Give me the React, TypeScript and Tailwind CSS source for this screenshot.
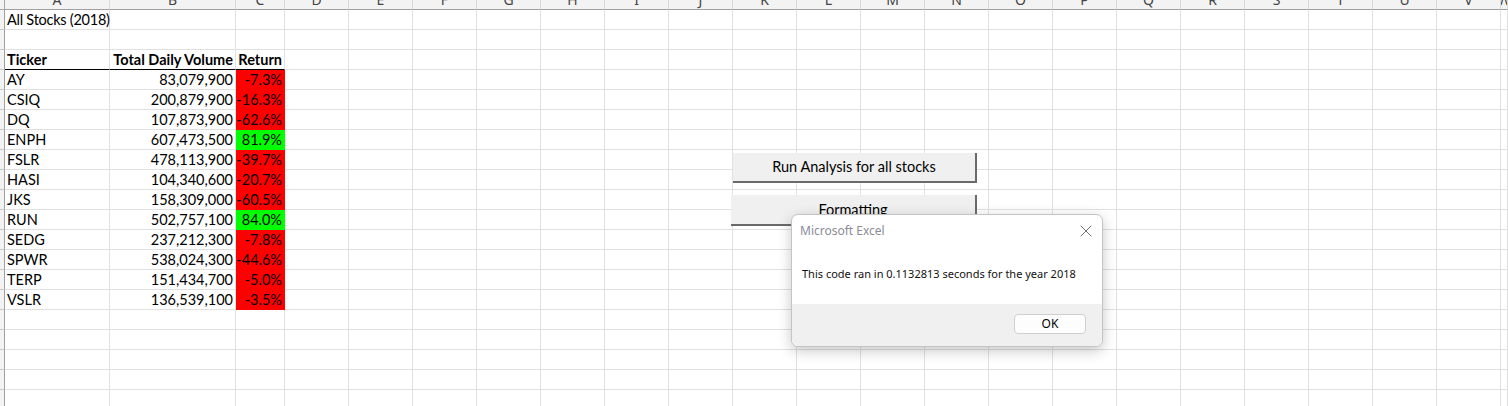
import { X } from "lucide-react";

type Stock = { ticker: string; volume: string; ret: string; up: boolean };

const stocks: Stock[] = [
  { ticker: "AY", volume: "83,079,900", ret: "-7.3%", up: false },
  { ticker: "CSIQ", volume: "200,879,900", ret: "-16.3%", up: false },
  { ticker: "DQ", volume: "107,873,900", ret: "-62.6%", up: false },
  { ticker: "ENPH", volume: "607,473,500", ret: "81.9%", up: true },
  { ticker: "FSLR", volume: "478,113,900", ret: "-39.7%", up: false },
  { ticker: "HASI", volume: "104,340,600", ret: "-20.7%", up: false },
  { ticker: "JKS", volume: "158,309,000", ret: "-60.5%", up: false },
  { ticker: "RUN", volume: "502,757,100", ret: "84.0%", up: true },
  { ticker: "SEDG", volume: "237,212,300", ret: "-7.8%", up: false },
  { ticker: "SPWR", volume: "538,024,300", ret: "-44.6%", up: false },
  { ticker: "TERP", volume: "151,434,700", ret: "-5.0%", up: false },
  { ticker: "VSLR", volume: "136,539,100", ret: "-3.5%", up: false },
];

const letters = "ABCDEFGHIJKLMNOPQRSTUVW".split("");
const ROWS = 20;

const cell = "border-r border-b border-[#e1e1e1] flex items-end pb-[1px] leading-[16px] whitespace-nowrap";

function Cell({ row, col }: { row: number; col: number }) {
  // row is the sheet row (1-based), col 0 = A
  if (row === 1 && col === 0) {
    return <div className={`${cell} pl-[2px] tracking-[-0.25px]`}>All Stocks (2018)</div>;
  }
  if (row === 3 && col < 3) {
    const label = ["Ticker", "Total Daily Volume", "Return"][col];
    return (
      <div
        className={`${cell} font-bold !border-b-black ${col === 0 ? "pl-[2px]" : "justify-end pr-[2px]"}`}
      >
        {label}
      </div>
    );
  }
  const s = stocks[row - 4];
  if (s && col < 3) {
    if (col === 0) return <div className={`${cell} pl-[2px]`}>{s.ticker}</div>;
    if (col === 1) return <div className={`${cell} justify-end pr-[2px]`}>{s.volume}</div>;
    return (
      <div
        className={`${cell} justify-end pr-[2px] ${s.up ? "bg-[#00ff00] !border-[#00ff00]" : "bg-[#ff0000] !border-[#ff0000]"}`}
      >
        {s.ret}
      </div>
    );
  }
  return <div className={cell} />;
}

export default function App() {
  return (
    <div className="relative h-[406px] w-[1508px] overflow-hidden bg-white text-[14.5px] text-black font-['Lato',sans-serif]">
      <div className="grid grid-cols-[5px_105px_126px_49px_repeat(19,64px)_1fr] grid-rows-[10px_repeat(20,20px)]">
        <div className="border-r border-b border-[#a8a8a8] bg-[#f3f3f3]" />
        {letters.map((l) => (
          <div
            key={l}
            className="flex justify-center overflow-hidden border-r border-b border-r-[#dadada] border-b-[#a0a0a0] bg-[#f3f3f3]"
          >
            <span className="-mt-[7px] block text-[14px] leading-[14px] text-[#444] font-['Noto_Sans',sans-serif]">
              {l}
            </span>
          </div>
        ))}
        {Array.from({ length: ROWS }, (_, r) => (
          <div key={r} className="contents">
            <div className="border-r border-b border-r-[#a0a0a0] border-b-[#c8c8c8] bg-[#f3f3f3]" />
            {letters.map((l, c) => (
              <Cell key={l} row={r + 1} col={c} />
            ))}
          </div>
        ))}
      </div>

      {/* macro buttons on the sheet */}
      <button className="absolute left-[733px] top-[153px] flex h-[30px] w-[244px] items-center justify-center border-r-2 border-b-2 border-[#6a6a6a] bg-[#f0f0f0] text-[14.5px]">
        Run Analysis for all stocks
      </button>
      <button className="absolute left-[731px] top-[195px] flex h-[31px] w-[246px] items-center justify-center border-r-2 border-b-2 border-[#6a6a6a] bg-[#f0f0f0] text-[14.5px]">
        Formatting
      </button>

      {/* message box */}
      <div className="absolute left-[791px] top-[214px] flex h-[133px] w-[312px] flex-col overflow-hidden rounded-[7px] border border-[#c4c4c4] bg-white shadow-[0_4px_14px_rgba(0,0,0,0.22)] font-['Noto_Sans',sans-serif]">
        <div className="flex h-[31px] items-center justify-between pl-[8px] pr-[6px]">
          <span className="text-[12px] text-[#8b8b97]">Microsoft Excel</span>
          <X size={20} strokeWidth={1.2} className="text-[#6e6e6e]" />
        </div>
        <div className="flex flex-1 items-center pl-[10px] pb-[1px] text-[11px] text-[#111]">
          This code ran in 0.1132813 seconds for the year 2018
        </div>
        <div className="flex h-[42px] items-start justify-end bg-[#f0f0f0] pt-[10px] pr-[16px]">
          <button className="flex h-[20px] w-[72px] items-center justify-center rounded-[4px] border border-[#cfcfcf] bg-[#fdfdfd] text-[12px] text-black">
            OK
          </button>
        </div>
      </div>
    </div>
  );
}
